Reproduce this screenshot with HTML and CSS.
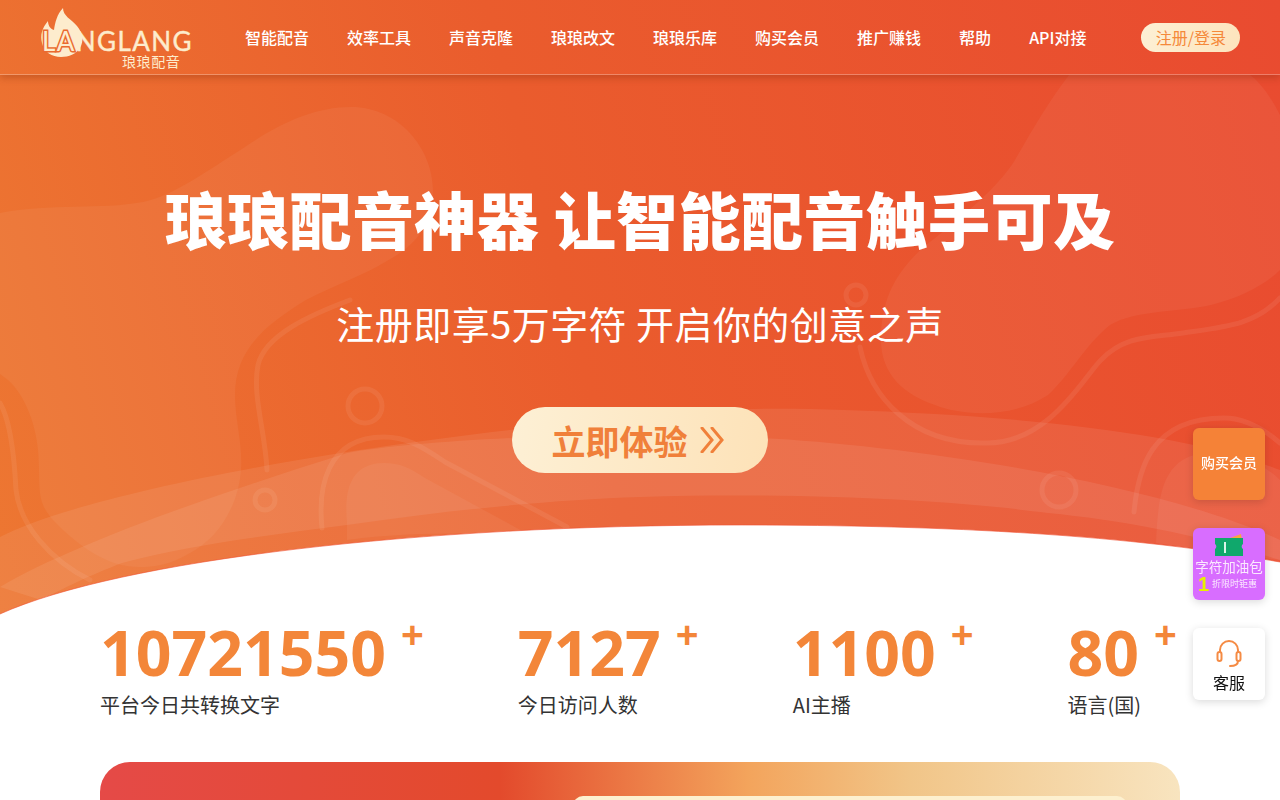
FILE: index.html
```html
<!DOCTYPE html>
<html lang="zh-CN">
<head>
    <meta charset="UTF-8">
    <meta name="viewport" content="width=device-width, initial-scale=1.0">
    <title>琅琅配音</title>
    <link rel="stylesheet" href="styles.css">
</head>
<body>

<div class="page">
    <div class="hero">
        <svg class="hero-bg" viewBox="0 0 1280 620" width="1280" height="620">
            <!-- blobs -->
            <path class="blob" d="M0 213 C50 203 100 210 143 202 C175 195 205 172 245 147 C280 123 315 107 351 107 C400 107 433 150 433 190 C433 225 415 245 392 258 C365 275 335 285 306 300 C265 325 235 350 235 395 C235 420 243 445 241 470 C238 510 215 540 190 553 C170 565 155 567 139 567 C110 567 82 550 53 520 C35 500 41 487 38 450 C36 425 25 395 8 380 L0 374 Z"/>
            <path class="blob" d="M1069 75 C1050 100 1035 125 1015 160 C1000 185 965 215 926 245 C895 272 881 300 881 340 C881 375 905 395 935 405 C960 415 1010 420 1048 395 C1070 375 1085 345 1110 325 C1135 310 1180 312 1211 305 C1240 298 1265 285 1280 270 L1280 115 C1270 95 1258 80 1250 75 Z"/>
            <!-- thin lines and rings -->
            <g class="lines">
                <path d="M267 470 C265 430 252 395 258 365 C265 335 310 315 350 300"/>
                <path d="M0 403 C10 420 14 450 16 490 C20 525 50 560 90 580"/>
                <path d="M322 528 C318 490 325 437 384 437 C405 437 420 445 445 462 L567 527"/>
                <path d="M1134 512 C1138 470 1150 418 1224 418 C1245 418 1265 430 1280 443"/>
                <path d="M860 347 C870 395 910 445 987 443 C1050 443 1085 375 1101 360 C1125 335 1150 338 1183 333 C1225 327 1255 325 1280 298"/>
                <circle cx="365" cy="406" r="17"/>
                <circle cx="265" cy="500" r="10"/>
                <circle cx="1059" cy="490" r="17"/>
                <circle cx="856" cy="295" r="10"/>
            </g>
            <!-- wave bands -->
            <path class="band" d="M0 537 C60 505 250 460 510 430 C620 415 720 405 844 410 C1000 415 1180 430 1280 470 L1280 620 L0 620 Z"/>
            <path class="band" d="M0 587 C80 540 230 490 347 453 C420 440 600 430 762 438 C900 445 1150 480 1280 540 L1280 560 C1200 535 1120 520 1048 513 C950 500 800 492 640 497 C550 500 450 510 347 525 C270 535 190 545 122 563 C90 575 60 590 41 600 Z"/>
            <path class="blob-soft" d="M347 523 C345 500 345 463 384 463 C400 463 410 468 425 478 L526 533 C480 535 420 530 347 540 Z"/>
            <path class="blob-soft" d="M1156 543 C1158 500 1160 453 1211 453 C1240 453 1265 465 1280 480 L1280 560 Z"/>
            <!-- white curve -->
            <path class="curve" d="M0 614 C120 560 420 525 740 525 C950 525 1130 535 1280 562 L1280 620 L0 620 Z"/>
            <path class="curve-edge" d="M0 614 C120 560 420 525 740 525 C950 525 1130 535 1280 562"/>
        </svg>

        <div class="navbar">
            <a class="logo" href="#">
                <svg class="logo-flame" viewBox="0 0 44 50" width="44" height="50">
                    <path d="M23 0 C23 8 31 11 37 18 C43 25 44 33 40 40 C36 46 29 49 21 49 C12 49 4 44 2 35 C0 27 2 20 8 13 C8 17 10 21 14 22 C15 15 17 6 23 0 Z"/>
                </svg>
                <span class="logo-text"><span class="logo-la">LA</span>NGLANG</span>
                <span class="logo-sub">琅琅配音</span>
            </a>
            <div class="menu">
                <a href="#">智能配音</a>
                <a href="#">效率工具</a>
                <a href="#">声音克隆</a>
                <a href="#">琅琅改文</a>
                <a href="#">琅琅乐库</a>
                <a href="#">购买会员</a>
                <a href="#">推广赚钱</a>
                <a href="#">帮助</a>
                <a href="#">API对接</a>
            </div>
            <a class="login" href="#">注册/登录</a>
        </div>

        <div class="hero-text">
            <h1>琅琅配音神器 让智能配音触手可及</h1>
            <p>注册即享5万字符 开启你的创意之声</p>
            <a class="try-btn" href="#">
                立即体验
                <svg viewBox="0 0 24 26" width="24" height="26">
                    <path d="M2 1 L12 13 L2 25 M12 1 L22 13 L12 25"/>
                </svg>
            </a>
        </div>
    </div>

    <div class="stats">
        <div class="stat">
            <div class="stat-num">10721550<span>+</span></div>
            <div class="stat-label">平台今日共转换文字</div>
        </div>
        <div class="stat">
            <div class="stat-num">7127<span>+</span></div>
            <div class="stat-label">今日访问人数</div>
        </div>
        <div class="stat">
            <div class="stat-num">1100<span>+</span></div>
            <div class="stat-label">AI主播</div>
        </div>
        <div class="stat">
            <div class="stat-num">80<span>+</span></div>
            <div class="stat-label">语言(国)</div>
        </div>
    </div>

    <div class="banner">
        <div class="banner-inner"></div>
    </div>
</div>

<div class="side">
    <a class="side-item side-vip" href="#">购买会员</a>
    <a class="side-item side-pack" href="#">
        <svg viewBox="0 0 28 24" width="28" height="24">
            <path fill="#f9a53f" d="M7 8 L26 1 L27 8 Z"/>
            <path fill="#10a86c" d="M0 5 H28 V11 A3 3 0 0 0 28 16 V23 H0 V16 A3 3 0 0 0 0 11 Z"/>
            <rect x="9" y="9" width="2" height="11" fill="#d9f5e8"/>
        </svg>
        <span class="pack-name">字符加油包</span>
        <span class="pack-sale"><b>1</b>折限时钜惠</span>
    </a>
    <a class="side-item side-help" href="#">
        <svg viewBox="0 0 26 28" width="26" height="28">
            <path d="M4 12 V10 A9 9 0 0 1 22 10 V12"/>
            <rect x="1.5" y="12" width="4" height="9" rx="2"/>
            <rect x="20.5" y="12" width="4" height="9" rx="2"/>
            <path d="M22 21 C22 25 19 26 14 26"/>
        </svg>
        <span>客服</span>
    </a>
</div>

</body>
</html>
```

FILE: styles.css
```css
html, body {
    margin: 0;
    padding: 0;
    height: 800px;
    overflow: hidden;
    background-color: white;
    font-family: "Noto Sans CJK SC", "Liberation Sans", sans-serif;
}
a {
    text-decoration: none;
    color: inherit;
}
.page {
    height: 800px;
    overflow: hidden;
}

/* hero */
.hero {
    position: relative;
    height: 620px;
    background: linear-gradient(75deg, #ed7732 0%, #ea5c2d 45%, #e94b30 100%);
}
.hero-bg {
    position: absolute;
    top: 0;
    left: 0;
}
.hero-bg .blob {
    fill: rgba(255, 255, 255, 0.05);
}
.hero-bg .blob-soft {
    fill: rgba(255, 255, 255, 0.05);
}
.hero-bg .band {
    fill: rgba(255, 255, 255, 0.08);
}
.hero-bg .lines {
    fill: none;
    stroke: rgba(255, 255, 255, 0.07);
    stroke-width: 5;
    stroke-linecap: round;
}
.hero-bg .curve {
    fill: white;
}
.hero-bg .curve-edge {
    fill: none;
    stroke: rgba(240, 80, 50, 0.6);
    stroke-width: 1;
}

/* navbar */
.navbar {
    position: relative;
    display: flex;
    align-items: center;
    height: 74px;
    padding-left: 40px;
    border-bottom: 1px solid rgba(255, 255, 255, 0.28);
    box-shadow: 0 3px 7px rgba(120, 40, 10, 0.3);
}
.logo {
    position: relative;
    display: block;
    width: 152px;
    height: 74px;
    color: #fdeccd;
}
.logo-flame {
    position: absolute;
    top: 8px;
    left: 0;
    fill: #fdeccd;
}
.logo-text {
    position: absolute;
    top: 28px;
    left: 2px;
    font-family: Lato, sans-serif;
    font-size: 26px;
    line-height: 26px;
    letter-spacing: 1.4px;
    white-space: nowrap;
    -webkit-text-stroke: 0.4px #fdeccd;
}
.logo-la {
    -webkit-text-stroke: 3px #ea6a30;
    paint-order: stroke fill;
}
.logo-sub {
    position: absolute;
    top: 53px;
    left: 82px;
    font-size: 14px;
    line-height: 16px;
    letter-spacing: 0.6px;
    white-space: nowrap;
}
.menu {
    display: flex;
    gap: 38px;
    margin-left: 53px;
}
.menu a {
    color: white;
    font-size: 16px;
    font-weight: 500;
    line-height: 24px;
}
.login {
    width: 99px;
    height: 29px;
    margin-left: 55px;
    border-radius: 15px;
    background: linear-gradient(100deg, #fdf0d5, #fde4bd);
    color: #f5893a;
    font-size: 16px;
    line-height: 29px;
    text-align: center;
}

/* hero text */
.hero-text {
    position: relative;
    text-align: center;
    color: white;
}
.hero-text h1 {
    margin: 103px 0 0;
    font-size: 62px;
    font-weight: 900;
    line-height: 80px;
    letter-spacing: 0.4px;
}
.hero-text p {
    margin: 40px 0 0;
    font-size: 38px;
    font-weight: 400;
    line-height: 50px;
    letter-spacing: 0.45px;
}
.try-btn {
    display: inline-flex;
    align-items: center;
    justify-content: center;
    gap: 12px;
    box-sizing: border-box;
    width: 256px;
    height: 66px;
    margin-top: 59px;
    padding-right: 5px;
    border-radius: 33px;
    background: linear-gradient(100deg, #fdf0d5, #fde2b8);
    color: #f0803a;
    font-size: 34px;
    font-weight: 700;
}
.try-btn svg {
    fill: none;
    stroke: #f0803a;
    stroke-width: 3;
    stroke-linecap: round;
}

/* numbers */
.stats {
    display: flex;
    justify-content: space-between;
    position: relative;
    margin: 0 103px 0 100px;
}
.stat-num {
    display: flex;
    align-items: flex-start;
    font-family: "Open Sans", sans-serif;
    font-size: 62.5px;
    font-weight: 700;
    line-height: 64px;
    color: #f38639;
}
.stat-num span {
    margin-left: 15px;
    font-size: 40px;
    line-height: 28px;
}
.stat-label {
    margin-top: 6px;
    color: #333;
    font-size: 20px;
    line-height: 30px;
}

/* bottom banner */
.banner {
    height: 200px;
    margin: 42px 100px 0;
    overflow: hidden;
    border-radius: 30px;
    background: linear-gradient(90deg, #e54a47 0%, #e34a2c 37%, #f3a45c 60%, #f1c588 75%, #f8e4bf 100%);
}
.banner-inner {
    height: 160px;
    margin: 34px 53px 0 473px;
    border-radius: 10px;
    background-color: #fdf0cf;
}

/* floating side buttons */
.side {
    position: fixed;
    top: 428px;
    right: 15px;
    display: flex;
    flex-direction: column;
    gap: 28px;
}
.side-item {
    display: flex;
    flex-direction: column;
    align-items: center;
    justify-content: center;
    width: 72px;
    height: 72px;
    border-radius: 6px;
    box-shadow: 0 2px 8px rgba(0, 0, 0, 0.15);
}
.side-vip {
    box-sizing: border-box;
    padding-bottom: 4px;
    background-color: #f58237;
    color: white;
    font-size: 14px;
    font-weight: 500;
}
.side-pack {
    justify-content: flex-start;
    padding-top: 5px;
    box-sizing: border-box;
    background-color: #d86dff;
    color: #fbe9ff;
}
.pack-name {
    font-size: 13.5px;
    line-height: 18px;
    white-space: nowrap;
}
.pack-sale {
    display: flex;
    align-items: center;
    gap: 3px;
    margin-left: -3px;
    font-size: 9px;
    line-height: 18px;
    white-space: nowrap;
}
.pack-sale b {
    color: #e6f000;
    font-family: "Liberation Sans", sans-serif;
    font-size: 20px;
    line-height: 18px;
}
.side-help {
    padding-top: 6px;
    box-sizing: border-box;
    background-color: white;
    color: #111;
    font-size: 16px;
    line-height: 24px;
}
.side-help svg {
    margin-bottom: 2px;
    fill: none;
    stroke: #f58b44;
    stroke-width: 2;
    stroke-linecap: round;
}
```
